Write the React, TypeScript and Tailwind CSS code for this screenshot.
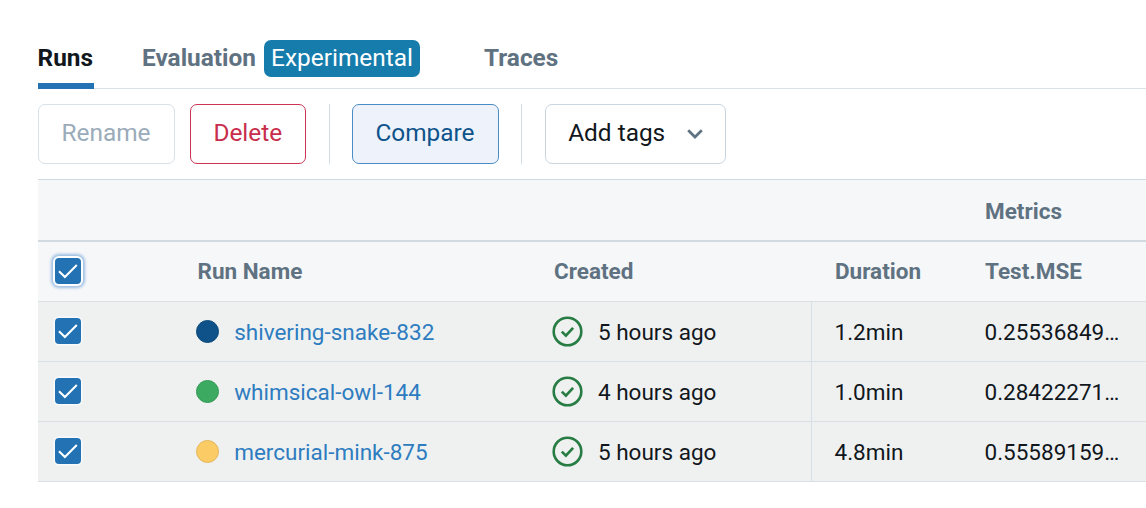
import React from 'react';

type Run = {
  name: string;
  dot: string;
  created: string;
  duration: string;
  mse: string;
};

const runs: Run[] = [
  { name: 'shivering-snake-832', dot: 'bg-[#0f5289] border-[#0d4a7c]', created: '5 hours ago', duration: '1.2min', mse: '0.25536849…' },
  { name: 'whimsical-owl-144', dot: 'bg-[#3caa60] border-[#369957]', created: '4 hours ago', duration: '1.0min', mse: '0.28422271…' },
  { name: 'mercurial-mink-875', dot: 'bg-[#fbcb66] border-[#e2b75c]', created: '5 hours ago', duration: '4.8min', mse: '0.55589159…' },
];

const columns = 'grid grid-cols-[160px_356px_257.5px_173.5px_1fr]';

function Checkbox({ focused = false }: { focused?: boolean }) {
  return (
    <span
      className={
        focused
          ? 'mb-[1.5px] ml-[17px] flex size-[26px] items-center justify-center rounded-[4px] bg-[#2272b4] shadow-[0_0_0_2px_#fff,0_0_3px_4px_#9dbfe2]'
          : 'mb-[1.5px] ml-[17px] flex size-[26px] items-center justify-center rounded-[4px] bg-[#2272b4] shadow-[0_0_0_1.5px_#f8fafb]'
      }
    >
      <svg width="26" height="26" viewBox="0 0 26 26" fill="none" stroke="#fff" strokeWidth="2.1">
        <path d="M4 13.2 L9.9 19.1 L21.8 7" />
      </svg>
    </span>
  );
}

function StatusIcon() {
  return (
    <svg width="32" height="32" viewBox="0 0 32 32" fill="none" stroke="#277c43">
      <circle cx="15.5" cy="15.5" r="13.8" strokeWidth="2.6" />
      <path d="M9.8 15.6 L13.9 19.6 L21.1 11.8" strokeWidth="2.7" />
    </svg>
  );
}

export default function App() {
  return (
    <div className="h-[508px] w-[1146px] overflow-hidden bg-white pl-[37.5px] font-['Roboto',sans-serif] text-[24.4px] leading-[36px] text-[#11171c]">
      <nav className="flex h-[88.5px] border-b-[1.5px] border-[#dbe1e9] pt-[40px] font-bold text-[#5f7281]">
        <div className="-mb-[1.5px] w-14 border-b-[6px] border-[#2272b4] text-[#11171c]">Runs</div>
        <div className="ml-[48.5px] flex h-[37px] items-start">
          <span className="w-[121.5px] whitespace-nowrap">Evaluation</span>
          <span className="flex h-[37px] w-[156px] items-center justify-center rounded-[7px] bg-[#157cab] pb-[1px] pl-[1px] font-normal text-white">
            Experimental
          </span>
        </div>
        <div className="ml-[64.5px]">Traces</div>
      </nav>

      <div className="mt-[15px] flex h-[60px]">
        <button className="w-[137px] rounded-[7px] border-[1.5px] border-[#d8e0e8] pb-[2px] text-[#9aabba]">Rename</button>
        <button className="ml-[15px] w-[116.5px] rounded-[7px] border-[1.5px] border-[#cb3452] pb-[2px] text-[#c82d4c]">Delete</button>
        <span className="ml-[22.5px] w-px bg-[#d3dce4]" />
        <button className="ml-[22px] w-[147px] rounded-[7px] border-[1.5px] border-[#4a8cc4] bg-[#eef3fb] pb-[2px] text-[#0e538b]">Compare</button>
        <span className="ml-[22px] w-px bg-[#d3dce4]" />
        <button className="ml-[23.2px] flex w-[181px] items-center rounded-[7px] border-[1.5px] border-[#c9d5df] pb-[2px] pl-[22.5px]">
          <span className="w-[119px] text-left">Add tags</span>
          <svg className="mt-[3px]" width="16" height="12" viewBox="0 0 16 12" fill="none" stroke="#5f7281" strokeWidth="2.7">
            <path d="M1.2 2.3 L8 9 L14.8 2.3" />
          </svg>
        </button>
      </div>

      <div className="mt-[15.5px] border-t border-[#d1d9e1] text-[22.5px]">
        <div className={`${columns} h-[62px] items-center border-b-[2px] border-[#d1d9e1] bg-[#f6f7f9] font-bold text-[#5f7281]`}>
          <span className="col-start-5 pt-[2px] pl-[0.5px]">Metrics</span>
        </div>
        <div className={`${columns} h-[60px] items-center border-b-[1.5px] border-[#d8e0e6] bg-[#f6f7f9] font-bold text-[#5f7281]`}>
          <Checkbox focused />
          <span className="pb-[2px]">Run Name</span>
          <span className="pb-[2px] pl-[0.5px]">Created</span>
          <span className="pb-[2px] pl-[24px]">Duration</span>
          <span className="pb-[2px] pl-[0.5px]">Test.MSE</span>
        </div>
        {runs.map((run) => (
          <div key={run.name} className={`${columns} h-[60px] items-center border-b-[1.5px] border-[#d8e0e6] bg-[#eff1f1]`}>
            <Checkbox />
            <span className="flex items-center text-[#2e7cc0]">
              <span className={`mr-[15.2px] ml-[-1.5px] size-[23px] rounded-full border ${run.dot}`} />
              {run.name}
            </span>
            <span className="flex items-center">
              <span className="-ml-[2px] mr-[14.5px]"><StatusIcon /></span>
              {run.created}
            </span>
            <span className="flex h-full items-center border-l-[1.5px] border-[#d8e0e6] pl-[22.5px]">{run.duration}</span>
            <span>{run.mse}</span>
          </div>
        ))}
      </div>
    </div>
  );
}
